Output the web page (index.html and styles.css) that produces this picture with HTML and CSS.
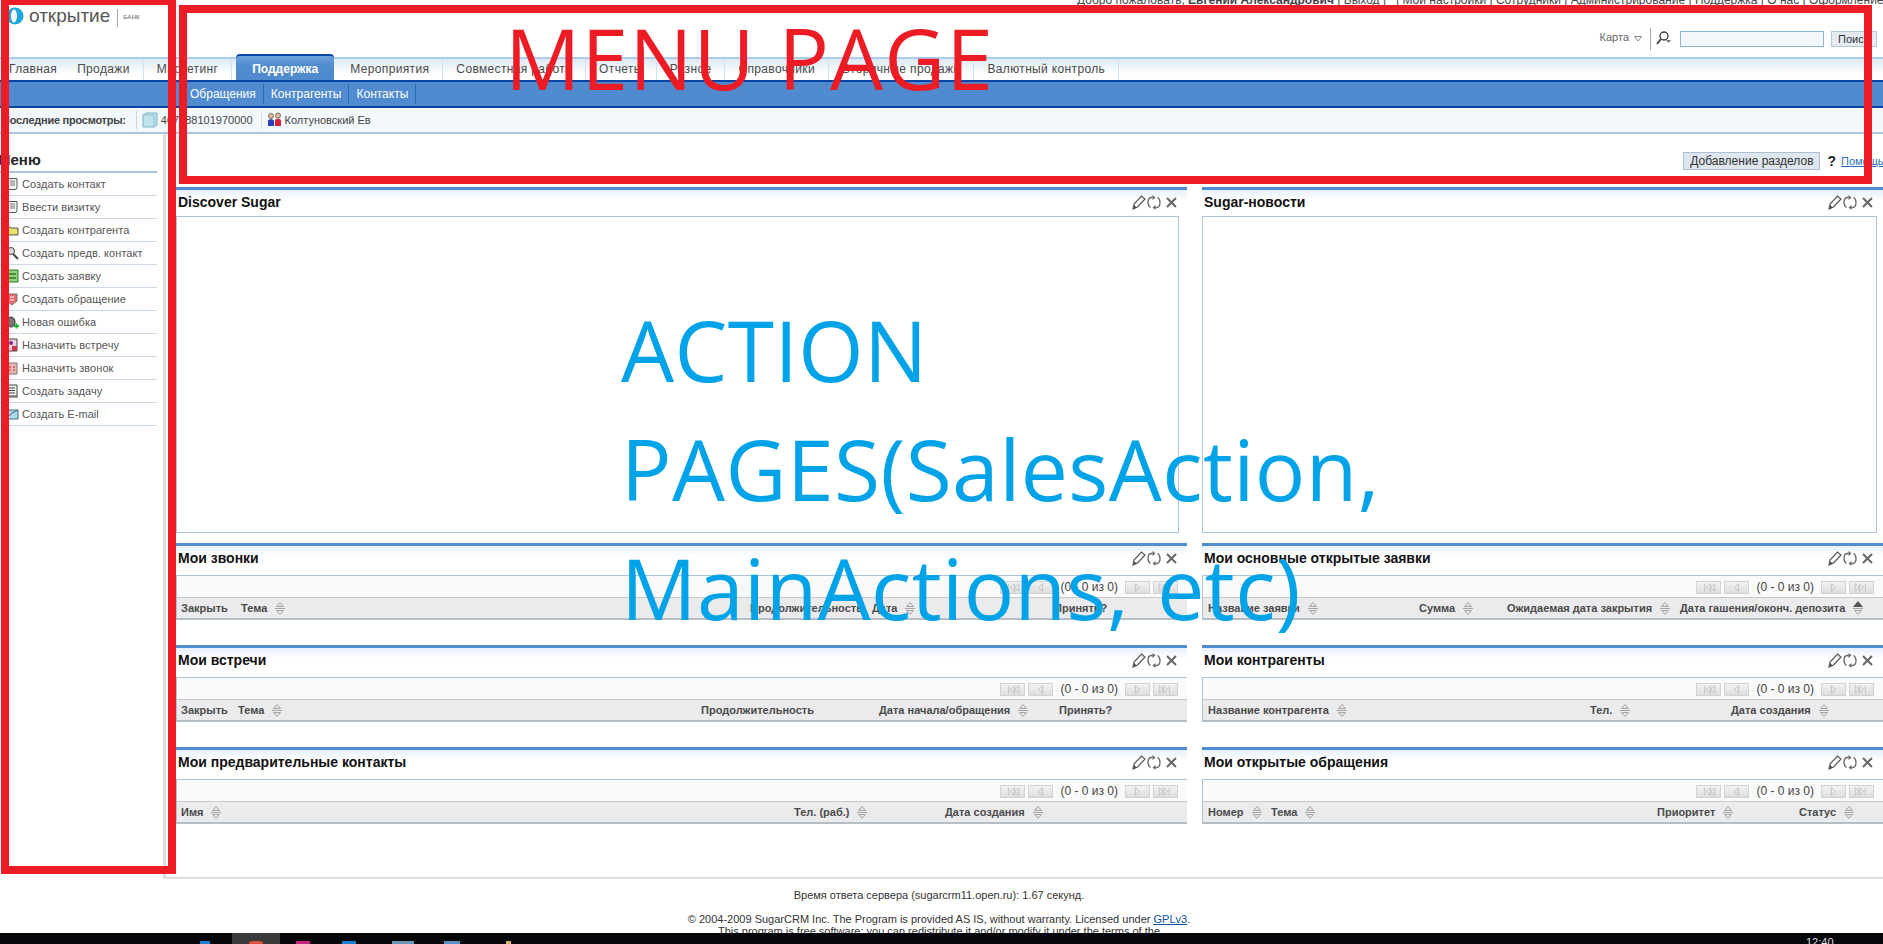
FILE: index.html
```html
<!DOCTYPE html>
<html lang="ru">

<head>
    <meta charset="UTF-8">
    <title>SugarCRM - Главная</title>
    <link rel="stylesheet" href="styles.css">
</head>

<body>
    <svg class="icon-defs" width="0" height="0">
        <symbol id="i-sort" viewBox="0 0 10 15">
            <path d="M5 1.500 8.500 5.500H1.500Z" fill="#e4e4e6" stroke="#a5a5a5"/>
            <path d="M0 7.500h10" stroke="#a5a5a5"/>
            <path d="M5 13.500 8.500 9.500H1.500Z" fill="#e4e4e6" stroke="#a5a5a5"/>
        </symbol>
        <symbol id="i-sort-up" viewBox="0 0 10 15">
            <path d="M5 0 10 6H0Z" fill="#555"/>
            <path d="M0 7.500h10" stroke="#a5a5a5"/>
            <path d="M5 13.500 8.500 9.500H1.500Z" fill="#e4e4e6" stroke="#a5a5a5"/>
        </symbol>
        <symbol id="i-first" viewBox="0 0 25 13">
            <path d="M8 2v9M15 2 10 6.500 15 11ZM20 2 15 6.500 20 11Z" fill="none" stroke="#bdbdbd"/>
        </symbol>
        <symbol id="i-prev" viewBox="0 0 25 13">
            <path d="M15 2 10 6.500 15 11Z" fill="none" stroke="#bdbdbd"/>
        </symbol>
        <symbol id="i-next" viewBox="0 0 25 13">
            <path d="M10 2 15 6.500 10 11Z" fill="none" stroke="#bdbdbd"/>
        </symbol>
        <symbol id="i-last" viewBox="0 0 25 13">
            <path d="M17 2v9M5 2 10 6.500 5 11ZM10 2 15 6.500 10 11Z" fill="none" stroke="#bdbdbd"/>
        </symbol>
        <symbol id="i-edit" viewBox="0 0 14 15">
            <path d="M1 14 2 9 9.500 1 13 4 5.500 12Z" fill="none" stroke="#555" stroke-width="1.200"/>
            <path d="M1 14 2 10 5 12.500Z" fill="#555"/>
        </symbol>
        <symbol id="i-refresh" viewBox="0 0 14 15">
            <path d="M5.500 2.500H4Q1 3 1 7.500 1 11 3.500 12.500M8.500 12.500H10Q13 12 13 7.500 13 4 10.500 2.500" fill="none" stroke="#666" stroke-width="1.300"/>
            <path d="M5.500 0 8.500 2.500 5.500 5ZM8.500 10 5.500 12.500 8.500 15Z" fill="#666"/>
        </symbol>
        <symbol id="i-close" viewBox="0 0 11 11">
            <path d="M1 1 10 10M10 1 1 10" stroke="#666" stroke-width="2"/>
        </symbol>
        <symbol id="i-doc" viewBox="0 0 14 14">
            <path d="M3 1.500h9v9l-1 2H2l1-2Z" fill="#f4f4f4" stroke="#555"/>
            <path d="M5 4h5M5 6h5M5 8h5" stroke="#777"/>
        </symbol>
    </svg>

    <div class="page">
        <header class="header">
            <div class="logo">
                <svg class="logo-mark" width="18" height="18" viewBox="0 0 18 18">
                    <circle cx="9" cy="9" r="8.500" fill="#1ea7dc"/>
                    <ellipse cx="8" cy="9" rx="3" ry="6.500" fill="#fff"/>
                </svg>
                <span class="logo-name">открытие</span>
                <span class="logo-sub">БАНК</span>
            </div>
            <div class="header-right">
                <div class="top-links">
                    Добро пожаловать, <b>Евгений Александрович</b> | Выход | &nbsp; | Мои настройки | Сотрудники | Администрирование | Поддержка | О нас | Оформление
                </div>
                <div class="search-row">
                    <span class="map-link">Карта</span>
                    <svg class="map-arrow" width="8" height="6" viewBox="0 0 8 6"><path d="M.5.500h7L4 5Z" fill="none" stroke="#888"/></svg>
                    <span class="search-divider">
                        <svg width="16" height="14" viewBox="0 0 16 14">
                            <circle cx="8" cy="5" r="4" fill="none" stroke="#444" stroke-width="1.400"/>
                            <path d="M5 8 1 13" stroke="#444" stroke-width="2"/>
                            <path d="M10 9h5l-2.500 3Z" fill="#777"/>
                        </svg>
                    </span>
                    <input class="search-input" type="text">
                    <button class="search-btn" type="button">Поиск</button>
                </div>
            </div>
        </header>

        <nav class="tabs">
            <a class="tab tab-plain">Главная</a>
            <a class="tab">Продажи</a>
            <a class="tab">Маркетинг</a>
            <a class="tab tab-active">Поддержка</a>
            <a class="tab">Мероприятия</a>
            <a class="tab">Совместная работа</a>
            <a class="tab">Отчеты</a>
            <a class="tab">Разное</a>
            <a class="tab">Справочники</a>
            <a class="tab">Вторичные продажи</a>
            <a class="tab">Валютный контроль</a>
        </nav>

        <nav class="subnav">
            <a class="subnav-item">Обращения</a>
            <a class="subnav-item">Контрагенты</a>
            <a class="subnav-item">Контакты</a>
        </nav>

        <div class="recent">
            <b class="recent-title">Последние просмотры:</b>
            <span class="recent-item">
                <svg width="16" height="16" viewBox="0 0 16 16">
                    <path d="M1 3 4 1h11v12l-3 2H1Z" fill="#bfe3ea" stroke="#7fb4c4"/>
                    <path d="M4 1v2H1M4 3h8v12" fill="none" stroke="#8fc2cf"/>
                </svg>
                407388101970000
            </span>
            <span class="recent-item">
                <svg width="15" height="15" viewBox="0 0 15 15">
                    <circle cx="4" cy="4" r="2.500" fill="#e8b98f" stroke="#333" stroke-width=".6"/>
                    <circle cx="11" cy="3.500" r="2.500" fill="#e8b98f" stroke="#333" stroke-width=".6"/>
                    <path d="M1 14V8.500Q4 5.500 7 8.500V14Z" fill="#2b3fc0"/>
                    <path d="M8 14V8Q11 5 14 8V14Z" fill="#d8243a"/>
                </svg>
                Колтуновский Ев
            </span>
        </div>

        <div class="layout">
            <aside class="sidebar">
                <h2 class="sidebar-title">Меню</h2>
                <ul class="side-menu">
                    <li><svg class="side-icon"><use href="#i-doc"/></svg>Создать контакт</li>
                    <li><svg class="side-icon"><use href="#i-doc"/></svg>Ввести визитку</li>
                    <li>
                        <svg class="side-icon" viewBox="0 0 14 14"><path d="M1 12V4h4l1 1h7v7Z" fill="#e8e06a" stroke="#555"/></svg>
                        Создать контрагента
                    </li>
                    <li>
                        <svg class="side-icon" viewBox="0 0 14 14"><circle cx="6" cy="5" r="3.500" fill="#ddd" stroke="#444"/><path d="M8 8 13 13" stroke="#444" stroke-width="2"/></svg>
                        Создать предв. контакт
                    </li>
                    <li>
                        <svg class="side-icon" viewBox="0 0 14 14"><path d="M1 1h12v12H1Z" fill="#8fd07a" stroke="#2f7a2a"/><path d="M3 5h8M3 9h8" stroke="#2f7a2a" stroke-width="1.500"/></svg>
                        Создать заявку
                    </li>
                    <li>
                        <svg class="side-icon" viewBox="0 0 14 14"><path d="M2 2h10v7l-5 4-5-4Z" fill="#ea6b6b" stroke="#777"/><path d="M5 5h4M5 8h4" stroke="#fff"/></svg>
                        Создать обращение
                    </li>
                    <li>
                        <svg class="side-icon" viewBox="0 0 14 14"><ellipse cx="6" cy="7" rx="4" ry="5" fill="#777" stroke="#333"/><path d="M9 11h5M11.500 8.500v5" stroke="#1fb52a" stroke-width="2"/></svg>
                        Новая ошибка
                    </li>
                    <li>
                        <svg class="side-icon" viewBox="0 0 14 14"><path d="M2 1h10v12H2Z" fill="#ead0dc" stroke="#444"/><circle cx="6" cy="5" r="2" fill="#7d2b8f"/><path d="M7 8h5v5H7Z" fill="#c43c4c"/></svg>
                        Назначить встречу
                    </li>
                    <li>
                        <svg class="side-icon" viewBox="0 0 14 14"><path d="M2 2h10v11H2Z" fill="#eeb4b0" stroke="#777"/><path d="M4 6h2M8 6h2M4 9h2M8 9h2" stroke="#a44"/></svg>
                        Назначить звонок
                    </li>
                    <li>
                        <svg class="side-icon" viewBox="0 0 14 14"><path d="M2 1h10v11H2Z" fill="#f4f4f4" stroke="#444"/><path d="M4 4h6M4 6.500h6M4 9h6M1 13h12" stroke="#444"/></svg>
                        Создать задачу
                    </li>
                    <li>
                        <svg class="side-icon" viewBox="0 0 14 14"><path d="M1 3h12v9H1Z" fill="#a8dcec" stroke="#3c6c7c"/><path d="M1 12 7 6l6-3" fill="none" stroke="#3c6c7c"/></svg>
                        Создать E-mail
                    </li>
                </ul>
            </aside>

            <main class="content">
                <div class="content-tools">
                    <button class="add-btn" type="button">Добавление разделов</button>
                    <b class="help-mark">?</b>
                    <a class="help-link">Помощь</a>
                </div>

                <div class="dashboard">
                    <section class="panel panel-frame">
                        <div class="panel-head">
                            <h3>Discover Sugar</h3>
                            <span class="panel-actions"><svg class="a-edit"><use href="#i-edit"/></svg><svg class="a-refresh"><use href="#i-refresh"/></svg><svg class="a-close"><use href="#i-close"/></svg></span>
                        </div>
                        <div class="frame-box"></div>
                    </section>
                    <section class="panel panel-frame">
                        <div class="panel-head">
                            <h3>Sugar-новости</h3>
                            <span class="panel-actions"><svg class="a-edit"><use href="#i-edit"/></svg><svg class="a-refresh"><use href="#i-refresh"/></svg><svg class="a-close"><use href="#i-close"/></svg></span>
                        </div>
                        <div class="frame-box"></div>
                    </section>

                    <section class="panel">
                        <div class="panel-head">
                            <h3>Мои звонки</h3>
                            <span class="panel-actions"><svg class="a-edit"><use href="#i-edit"/></svg><svg class="a-refresh"><use href="#i-refresh"/></svg><svg class="a-close"><use href="#i-close"/></svg></span>
                        </div>
                        <div class="list">
                            <div class="pager">
                                <svg class="pg"><use href="#i-first"/></svg><svg class="pg"><use href="#i-prev"/></svg>
                                <span class="pg-count">(0 - 0 из 0)</span>
                                <svg class="pg"><use href="#i-next"/></svg><svg class="pg"><use href="#i-last"/></svg>
                            </div>
                            <div class="list-head cols-calls">
                                <span>Закрыть</span>
                                <span>Тема <svg class="sort"><use href="#i-sort"/></svg></span>
                                <span>Продолжительность</span>
                                <span>Дата <svg class="sort"><use href="#i-sort"/></svg></span>
                                <span>Принять?</span>
                            </div>
                        </div>
                    </section>
                    <section class="panel">
                        <div class="panel-head">
                            <h3>Мои основные открытые заявки</h3>
                            <span class="panel-actions"><svg class="a-edit"><use href="#i-edit"/></svg><svg class="a-refresh"><use href="#i-refresh"/></svg><svg class="a-close"><use href="#i-close"/></svg></span>
                        </div>
                        <div class="list">
                            <div class="pager">
                                <svg class="pg"><use href="#i-first"/></svg><svg class="pg"><use href="#i-prev"/></svg>
                                <span class="pg-count">(0 - 0 из 0)</span>
                                <svg class="pg"><use href="#i-next"/></svg><svg class="pg"><use href="#i-last"/></svg>
                            </div>
                            <div class="list-head cols-opps">
                                <span>Название заявки <svg class="sort"><use href="#i-sort"/></svg></span>
                                <span>Сумма <svg class="sort"><use href="#i-sort"/></svg></span>
                                <span>Ожидаемая дата закрытия <svg class="sort"><use href="#i-sort"/></svg></span>
                                <span>Дата гашения/оконч. депозита <svg class="sort"><use href="#i-sort-up"/></svg></span>
                            </div>
                        </div>
                    </section>

                    <section class="panel">
                        <div class="panel-head">
                            <h3>Мои встречи</h3>
                            <span class="panel-actions"><svg class="a-edit"><use href="#i-edit"/></svg><svg class="a-refresh"><use href="#i-refresh"/></svg><svg class="a-close"><use href="#i-close"/></svg></span>
                        </div>
                        <div class="list">
                            <div class="pager">
                                <svg class="pg"><use href="#i-first"/></svg><svg class="pg"><use href="#i-prev"/></svg>
                                <span class="pg-count">(0 - 0 из 0)</span>
                                <svg class="pg"><use href="#i-next"/></svg><svg class="pg"><use href="#i-last"/></svg>
                            </div>
                            <div class="list-head cols-meetings">
                                <span>Закрыть</span>
                                <span>Тема <svg class="sort"><use href="#i-sort"/></svg></span>
                                <span>Продолжительность</span>
                                <span>Дата начала/обращения <svg class="sort"><use href="#i-sort"/></svg></span>
                                <span>Принять?</span>
                            </div>
                        </div>
                    </section>
                    <section class="panel">
                        <div class="panel-head">
                            <h3>Мои контрагенты</h3>
                            <span class="panel-actions"><svg class="a-edit"><use href="#i-edit"/></svg><svg class="a-refresh"><use href="#i-refresh"/></svg><svg class="a-close"><use href="#i-close"/></svg></span>
                        </div>
                        <div class="list">
                            <div class="pager">
                                <svg class="pg"><use href="#i-first"/></svg><svg class="pg"><use href="#i-prev"/></svg>
                                <span class="pg-count">(0 - 0 из 0)</span>
                                <svg class="pg"><use href="#i-next"/></svg><svg class="pg"><use href="#i-last"/></svg>
                            </div>
                            <div class="list-head cols-accounts">
                                <span>Название контрагента <svg class="sort"><use href="#i-sort"/></svg></span>
                                <span>Тел. <svg class="sort"><use href="#i-sort"/></svg></span>
                                <span>Дата создания <svg class="sort"><use href="#i-sort"/></svg></span>
                            </div>
                        </div>
                    </section>

                    <section class="panel">
                        <div class="panel-head">
                            <h3>Мои предварительные контакты</h3>
                            <span class="panel-actions"><svg class="a-edit"><use href="#i-edit"/></svg><svg class="a-refresh"><use href="#i-refresh"/></svg><svg class="a-close"><use href="#i-close"/></svg></span>
                        </div>
                        <div class="list">
                            <div class="pager">
                                <svg class="pg"><use href="#i-first"/></svg><svg class="pg"><use href="#i-prev"/></svg>
                                <span class="pg-count">(0 - 0 из 0)</span>
                                <svg class="pg"><use href="#i-next"/></svg><svg class="pg"><use href="#i-last"/></svg>
                            </div>
                            <div class="list-head cols-leads">
                                <span>Имя <svg class="sort"><use href="#i-sort"/></svg></span>
                                <span>Тел. (раб.) <svg class="sort"><use href="#i-sort"/></svg></span>
                                <span>Дата создания <svg class="sort"><use href="#i-sort"/></svg></span>
                            </div>
                        </div>
                    </section>
                    <section class="panel">
                        <div class="panel-head">
                            <h3>Мои открытые обращения</h3>
                            <span class="panel-actions"><svg class="a-edit"><use href="#i-edit"/></svg><svg class="a-refresh"><use href="#i-refresh"/></svg><svg class="a-close"><use href="#i-close"/></svg></span>
                        </div>
                        <div class="list">
                            <div class="pager">
                                <svg class="pg"><use href="#i-first"/></svg><svg class="pg"><use href="#i-prev"/></svg>
                                <span class="pg-count">(0 - 0 из 0)</span>
                                <svg class="pg"><use href="#i-next"/></svg><svg class="pg"><use href="#i-last"/></svg>
                            </div>
                            <div class="list-head cols-cases">
                                <span>Номер <svg class="sort"><use href="#i-sort"/></svg></span>
                                <span>Тема <svg class="sort"><use href="#i-sort"/></svg></span>
                                <span>Приоритет <svg class="sort"><use href="#i-sort"/></svg></span>
                                <span>Статус <svg class="sort"><use href="#i-sort"/></svg></span>
                            </div>
                        </div>
                    </section>
                </div>
            </main>
        </div>

        <footer class="footer">
            <p class="footer-time">Время ответа сервера (sugarcrm11.open.ru): 1.67 секунд.</p>
            <p>© 2004-2009 SugarCRM Inc. The Program is provided AS IS, without warranty. Licensed under <a class="footer-link">GPLv3</a>.</p>
            <p>This program is free software; you can redistribute it and/or modify it under the terms of the</p>
        </footer>
    </div>

    <!-- пометки поверх скриншота -->
    <div class="mark-box mark-menu"></div>
    <div class="mark-box mark-top"></div>
    <div class="mark-text mark-text-menu">MENU PAGE</div>
    <div class="mark-text mark-text-action">ACTION<br>PAGES(SalesAction,<br>MainActions, etc)</div>

    <div class="taskbar">
        <i class="task task-blue"></i>
        <i class="task task-active"><i class="task-dot"></i></i>
        <i class="task task-pink"></i>
        <i class="task task-blue2"></i>
        <i class="task task-steel"></i>
        <i class="task task-steel2"></i>
        <i class="task task-tan"></i>
        <span class="task-clock">12:40</span>
    </div>
</body>

</html>
```

FILE: styles.css
```css
:root {
    --blue: #4f8bce;
    --dark-blue: #0645a5;
    --line: #a9c4dc;
    --text: #444;
}

* {
    box-sizing: border-box;
}

html,
body {
    margin: 0;
    height: 944px;
    overflow: hidden;
    background-color: white;
}

body {
    font-family: "Liberation Sans", Arial, sans-serif;
    font-size: 11px;
    color: var(--text);
    position: relative;
}

.icon-defs {
    position: absolute;
}

.page {
    width: 1883px;
}

/* шапка */
.header {
    height: 57px;
    display: flex;
    justify-content: space-between;
}

.logo {
    display: flex;
    align-items: flex-start;
    padding: 7px 0 0 6px;
}

.logo-mark {
    margin-right: 5px;
}

.logo-name {
    font-size: 19px;
    line-height: 18px;
    color: #555;
    padding-right: 7px;
}

.logo-sub {
    height: 18px;
    margin-top: 2px;
    padding: 5px 0 0 5px;
    border-left: 1px solid #aaa;
    font-size: 6px;
    font-weight: bold;
    color: #888;
}

.header-right {
    width: 806px;
    overflow: hidden;
}

.top-links {
    margin-top: -6px;
    height: 12px;
    line-height: 12px;
    font-size: 12px;
    white-space: nowrap;
}

.search-row {
    margin-top: 22px;
    height: 22px;
    display: flex;
    align-items: center;
    justify-content: flex-end;
    padding-right: 6px;
}

.map-link {
    color: #666;
    margin-top: -4px;
}

.map-arrow {
    margin: 0 8px 0 5px;
}

.search-divider {
    display: flex;
    align-items: flex-start;
    height: 22px;
    margin-right: 8px;
    padding: 3px 0 0 5px;
    border-left: 1px solid #aaa;
}

.search-input {
    width: 144px;
    height: 16px;
    margin-right: 7px;
    border: 1px solid #8ab8e0;
    background-color: #f4f8fc;
    padding: 0;
}

.search-btn {
    width: 46px;
    height: 16px;
    padding: 0 0 0 6px;
    text-align: left;
    font: 11px "Liberation Sans", Arial, sans-serif;
    color: #333;
    background-color: #e4ebf2;
    border: 1px solid #b5c8da;
}

/* вкладки */
.tabs {
    height: 23px;
    display: flex;
    border-top: 2px solid #a9ccef;
    background: linear-gradient(#dce9f6, white 70%);
    font-size: 12px;
    letter-spacing: .35px;
    color: #4a4a4a;
}

.tab {
    height: 21px;
    line-height: 20px;
    padding: 0 13px;
    border-right: 1px solid #d3e2f1;
    white-space: nowrap;
}

.tab:first-child {
    padding-left: 9px;
}

.tab-plain {
    border-right: 0;
    padding-right: 7px;
}

.tab-active {
    height: 26px;
    margin: -5px 3px 0 4px;
    padding: 0 16px;
    line-height: 26px;
    border: 0;
    border-top: 2px solid var(--dark-blue);
    border-radius: 4px 4px 0 0;
    background: linear-gradient(#6fa3db, var(--blue) 40%);
    color: white;
    font-weight: bold;
    letter-spacing: 0;
}

.subnav {
    height: 28px;
    display: flex;
    align-items: center;
    padding-left: 183px;
    background-color: var(--blue);
    border-top: 2px solid var(--dark-blue);
    border-bottom: 2px solid var(--dark-blue);
    font-size: 12px;
    color: white;
}

.subnav-item {
    padding: 0 7px;
    line-height: 20px;
    border-right: 1px solid #2c6cb4;
}

/* последние просмотры */
.recent {
    height: 26px;
    display: flex;
    align-items: center;
    padding: 0 0 1px 2px;
    background-color: #f3f8fc;
    border-bottom: 2px solid var(--line);
}

.recent-title {
    padding-right: 10px;
    border-right: 1px solid #c8d6e2;
    line-height: 18px;
    letter-spacing: -.25px;
}

.recent-item {
    display: flex;
    align-items: center;
    gap: 3px;
    padding: 0 8px 0 5px;
    border-right: 1px solid #d5e0ea;
    line-height: 18px;
}

.recent-item:last-child {
    border: 0;
}

/* левое меню */
.layout {
    display: flex;
    height: 745px;
}

.sidebar {
    width: 166px;
    border-right: 3px solid #ddd;
    padding-right: 6px;
}

.sidebar-title {
    margin: 19px 0 0;
    padding: 0 0 4px;
    height: 20px;
    font-size: 15px;
    line-height: 14px;
    text-indent: -2px;
    color: #222;
    border-bottom: 2px solid var(--line);
}

.side-menu {
    list-style: none;
    margin: 0;
    padding: 0;
}

.side-menu li {
    height: 23px;
    display: flex;
    align-items: center;
    gap: 3px;
    padding-left: 5px;
    border-bottom: 1px solid #c9d9e8;
    letter-spacing: .06px;
    color: #555;
}

.side-icon {
    width: 14px;
    height: 14px;
    flex: none;
}

/* рабочая область */
.content {
    flex: 1;
    border-bottom: 2px solid #ddd;
    min-width: 0;
}

.content-tools {
    height: 53px;
    display: flex;
    align-items: flex-start;
    justify-content: flex-end;
    padding-top: 18px;
}

.add-btn {
    width: 137px;
    height: 18px;
    padding: 0;
    font: 12px "Liberation Sans", Arial, sans-serif;
    color: #333;
    background-color: #dfe6ee;
    border: 1px solid #a9c0d6;
}

.help-mark {
    margin: 0 5px 0 7px;
    font-size: 14px;
    line-height: 18px;
    color: #222;
}

.help-link {
    width: 42px;
    line-height: 18px;
    overflow: hidden;
    white-space: nowrap;
    color: #2a6fbb;
    text-decoration: underline;
}

.dashboard {
    display: grid;
    grid-template-columns: 1011px 681px;
    column-gap: 15px;
    padding-left: 10px;
}

.panel {
    height: 102px;
    border-top: 3px solid var(--blue);
    background: linear-gradient(#e6f0fa, white 10px) no-repeat;
}

.panel-frame {
    height: 356px;
}

.panel-head {
    height: 26px;
    display: flex;
    justify-content: space-between;
    padding: 4px 10px 0 2px;
}

.panel-head h3 {
    margin: 0;
    font-size: 14px;
    line-height: 16px;
    color: #111;
}

.panel-actions {
    display: flex;
    align-items: center;
    height: 16px;
}

.a-edit,
.a-refresh {
    width: 14px;
    height: 15px;
    margin-right: 1px;
}

.a-refresh {
    margin-right: 5px;
}

.a-close {
    width: 11px;
    height: 11px;
}

.frame-box {
    height: 317px;
    margin-right: 6px;
    border: 1px solid var(--line);
}

.panel-frame:first-child .frame-box {
    margin-right: 8px;
}

.list {
    margin-top: 3px;
    border-top: 1px solid var(--line);
    border-left: 1px solid var(--line);
    background-color: #fafafa;
}

.pager {
    height: 21px;
    display: flex;
    align-items: center;
    justify-content: flex-end;
    gap: 3px;
    padding: 1px 9px 0 0;
}

.pg {
    width: 25px;
    height: 13px;
    background: linear-gradient(#f2f2f2, #dedede);
    border: 1px solid #d2d2d2;
}

.pg-count {
    margin: 0 4px;
    font-size: 12px;
    white-space: nowrap;
}

.list-head {
    height: 23px;
    display: grid;
    align-items: center;
    padding-left: 5px;
    background-color: #ebebed;
    border-top: 1px solid #c8c8c8;
    border-bottom: 2px solid #b5bdc5;
    font-weight: bold;
    color: #4a4a4a;
    white-space: nowrap;
}

.list-head span {
    display: flex;
    align-items: center;
    gap: 8px;
}

.sort {
    width: 10px;
    height: 15px;
}

.cols-calls {
    grid-template-columns: 60px 509px 122px 182px 1fr;
    padding-left: 4px;
}

.cols-meetings {
    grid-template-columns: 57px 463px 178px 180px 1fr;
    padding-left: 4px;
}

.cols-leads {
    grid-template-columns: 613px 151px 1fr;
    padding-left: 4px;
}

.cols-opps {
    grid-template-columns: 211px 88px 173px 1fr;
}

.cols-accounts {
    grid-template-columns: 382px 141px 1fr;
}

.cols-cases {
    grid-template-columns: 63px 386px 142px 1fr;
}

/* подвал */
.footer {
    text-align: center;
    padding: 10px 5px 0 0;
    line-height: 12px;
    color: #333;
}

.footer p {
    margin: 0;
}

.footer-time {
    padding-bottom: 12px;
}

.footer-link {
    color: #0b4f9e;
    text-decoration: underline;
}

/* пометки */
.mark-box {
    position: absolute;
    border: 8px solid #ed1c24;
}

.mark-menu {
    left: 1px;
    top: -3px;
    width: 175px;
    height: 877px;
}

.mark-top {
    left: 179px;
    top: 5px;
    width: 1693px;
    height: 179px;
}

.mark-text {
    position: absolute;
    font-family: "Open Sans", sans-serif;
    font-size: 84px;
    line-height: 119px;
    white-space: nowrap;
}

.mark-text-menu {
    left: 505px;
    top: -2px;
    letter-spacing: 1px;
    color: #ed1c24;
}

.mark-text-action {
    left: 621px;
    top: 290px;
    letter-spacing: .4px;
    word-spacing: 6px;
    color: #00a2e8;
}

/* панель задач */
.taskbar {
    position: absolute;
    left: 0;
    right: 0;
    bottom: 0;
    height: 11px;
    display: flex;
    background-color: #05070a;
    overflow: hidden;
}

.task {
    display: block;
    height: 3px;
    margin-top: 8px;
}

.task-blue {
    width: 10px;
    margin-left: 200px;
    background-color: #1a7fd0;
}

.task-active {
    width: 48px;
    height: 11px;
    margin: 0 0 0 22px;
    background-color: #3a3a3d;
    padding: 8px 0 0 17px;
}

.task-dot {
    display: block;
    width: 14px;
    height: 3px;
    border-radius: 7px 7px 0 0;
    background-color: #d9503f;
}

.task-pink {
    width: 14px;
    margin-left: 16px;
    background-color: #c8267e;
}

.task-blue2 {
    width: 14px;
    margin-left: 32px;
    background-color: #1a7fd0;
}

.task-steel {
    width: 22px;
    margin-left: 36px;
    background-color: #6d93b5;
}

.task-steel2 {
    width: 16px;
    margin-left: 30px;
    background-color: #5d8fc4;
}

.task-tan {
    width: 5px;
    margin-left: 46px;
    background-color: #d8b070;
}

.task-clock {
    position: absolute;
    left: 1806px;
    top: 5px;
    line-height: 9px;
    color: #ddd;
    font-size: 11px;
}
```
